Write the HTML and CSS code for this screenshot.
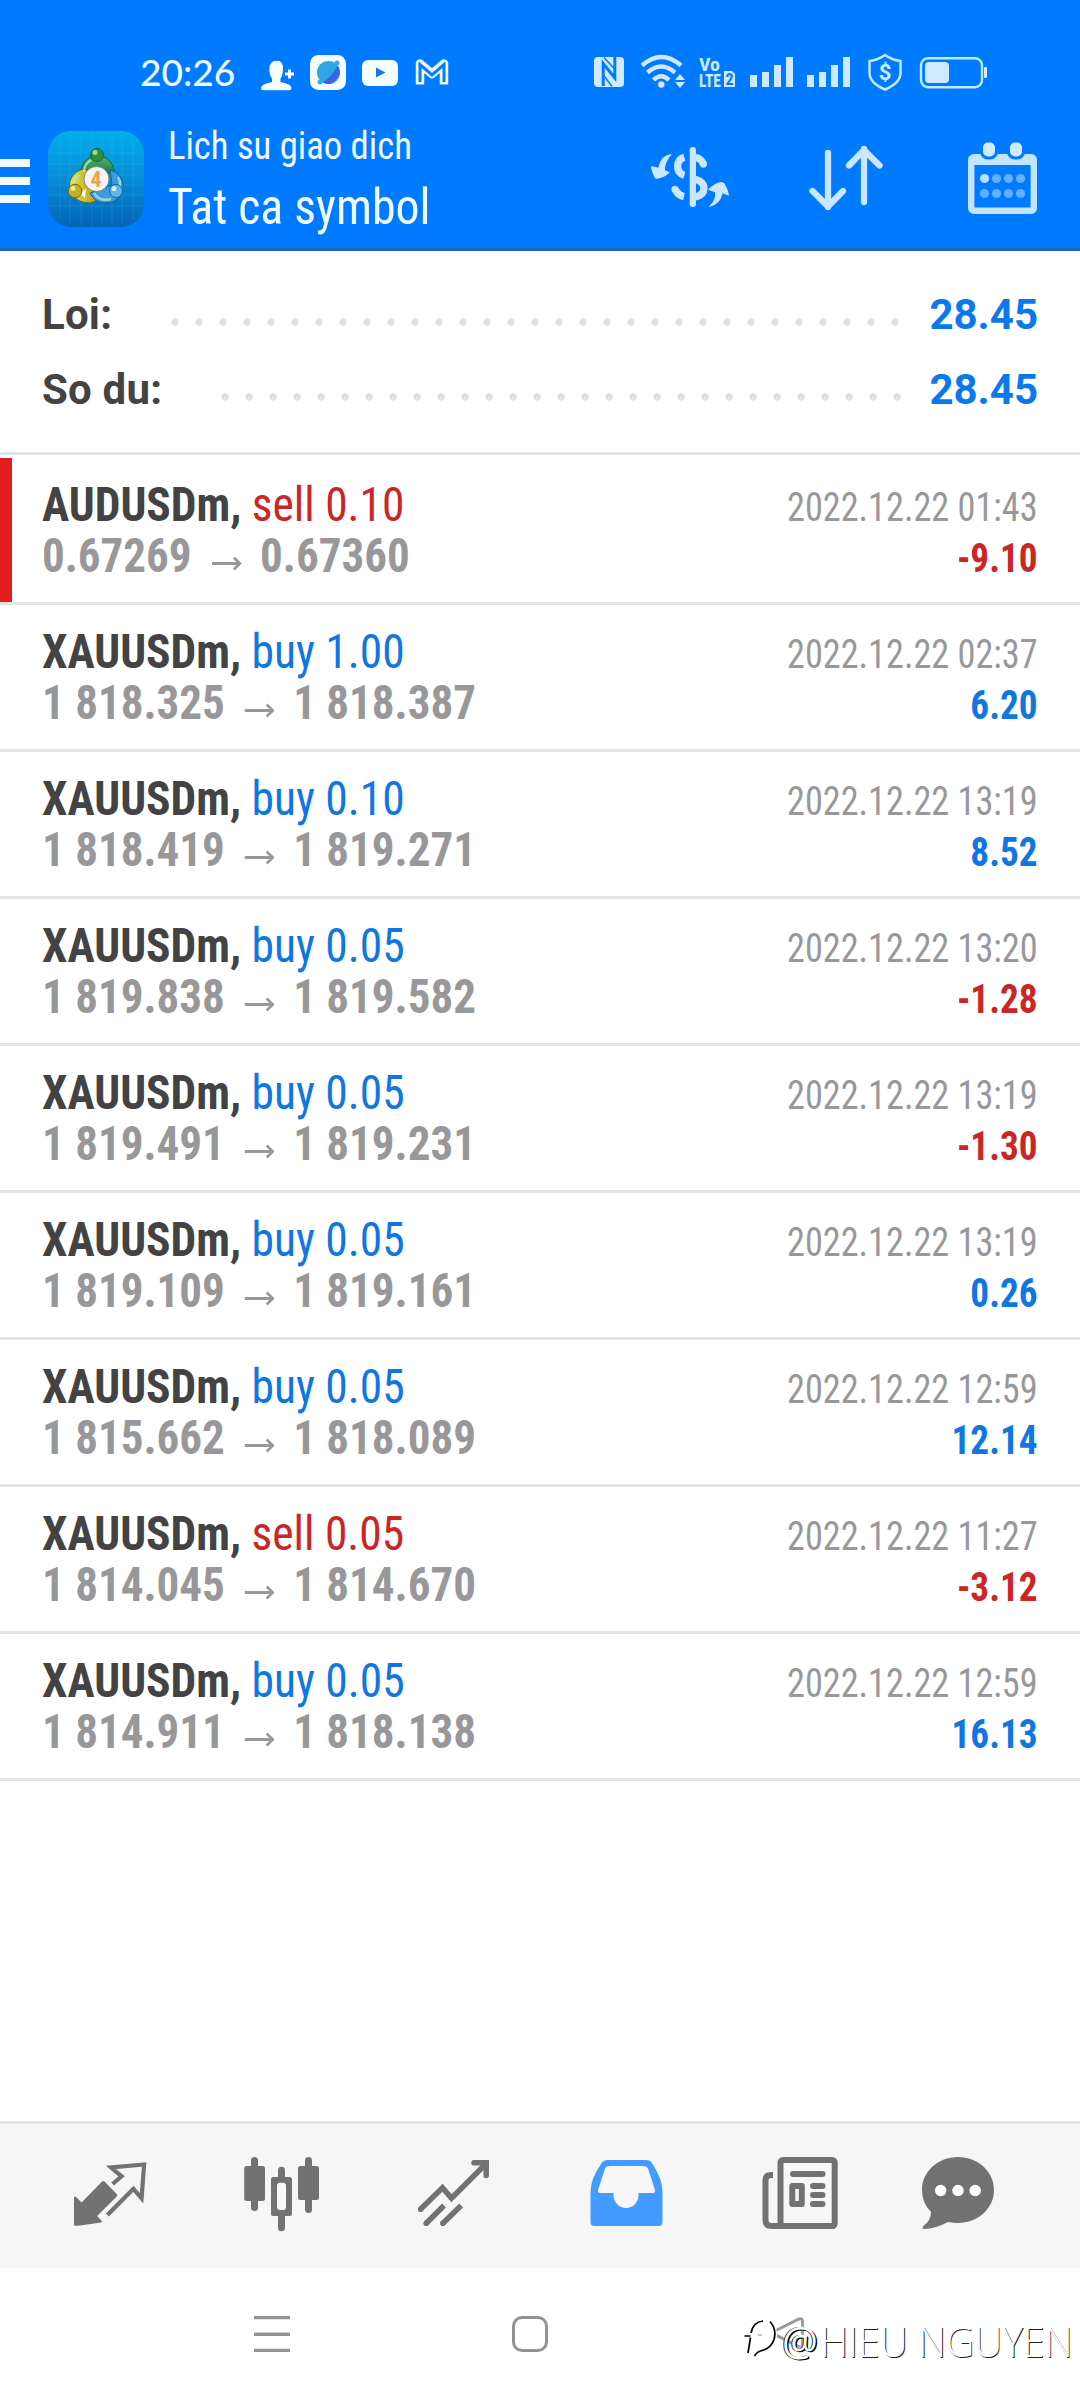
FILE: index.html
```html
<!DOCTYPE html>
<html lang="vi">
<head>
<meta charset="utf-8">
<title>Lich su giao dich</title>
<link rel="stylesheet" href="styles.css">
</head>
<body>
<header class="header">
  <div class="status">
    <span class="clock">20:26</span>
    <svg class="status-left" width="210" height="108" viewBox="250 0 210 108" fill="#f4fdff">
      <path d="M276.500 60.500q7 0 6.500 9q-.5 7-2.500 9v3.500q11 2 11 6q0 2.200-2.500 2.200h-25.500q-2.500 0-2.500-2.200q0-4 11-6v-3.500q-2.500-3-2.700-9q0-9 8.200-9z"/>
      <path d="M289.500 69.500v9M285 74h9" stroke="#f4fdff" stroke-width="3"/>
      <rect x="310" y="55" width="36" height="35" rx="8.500"/>
      <circle cx="328.500" cy="72.500" r="11.500" fill="#2fa6e4"/>
      <path d="M337.500 65.500q5 7-1 14t-14 3q9-5 15-17z" fill="#3b62e8"/>
      <circle cx="337" cy="63" r="2.500" fill="#3fa8dc"/><circle cx="320" cy="82" r="2.500" fill="#3fa8dc"/>
      <rect x="362" y="60" width="36" height="26" rx="6"/>
      <path d="M376 67.500l9.500 5-9.500 5z" fill="#1878e6"/>
      <path d="M420 84.500V63.500l12 10.500 12-10.500v21" fill="none" stroke="#eafcff" stroke-width="8.500" stroke-linejoin="round"/>
      <path d="M420 82V64.500l12 10.500 12-10.500V82" fill="none" stroke="#0a7cfb" stroke-width="3"/>
    </svg>
    <svg class="status-right" width="415" height="108" viewBox="585 0 415 108" fill="#cfeaff">
      <rect x="594" y="57" width="30" height="30" rx="4"/>
      <path d="M603.200 86V63.500l11.600 14.500V57" fill="none" stroke="#007aff" stroke-width="3"/>
      <path d="M604 57.500l11 12M603 74.500l9 12" stroke="#007aff" stroke-width="1.500"/>
      <g fill="none" stroke="#cfeaff" stroke-width="4.500">
        <path d="M642 65.500q19.500-17 39 0"/><path d="M647.500 72.500q13.500-12 27.500 0"/><path d="M653.500 80q7.500-7.500 15.500 0"/>
      </g>
      <circle cx="661.300" cy="84.500" r="3.200"/>
      <path d="M680 74l5 6h-10zM680 88l5-6h-10z"/>
      <text class="volte" x="699" y="71" textLength="21" lengthAdjust="spacingAndGlyphs">Vo</text>
      <text class="volte" x="699" y="86.500" textLength="22" lengthAdjust="spacingAndGlyphs">LTE</text>
      <path d="M724 71h8l3 3v13h-11z"/>
      <text class="sim" x="725.500" y="85">2</text>
      <path d="M750 75h7v12h-7zM762 72h7v15h-7zM774 65h7v22h-7zM786 57h7v30h-7z"/>
      <path d="M807 75h7v12h-7zM819 72h7v15h-7zM831 65h7v22h-7zM843 57h7v30h-7z"/>
      <path d="M885 55q7 5 15.500 6v12q0 10-15.500 16.500Q869.500 83 869.500 73V61q8.500-1 15.500-6z" fill="none" stroke="#bfeaff" stroke-width="2.500"/>
      <text class="shield" x="885" y="80" text-anchor="middle">$</text>
      <rect x="921" y="58.200" width="61" height="29" rx="7" fill="none" stroke="#bfeaff" stroke-width="2.400"/>
      <rect x="925" y="62" width="24" height="21" rx="4"/>
      <rect x="984" y="67" width="3" height="11" rx="1"/>
    </svg>
  </div>
  <div class="appbar">
    <svg class="menu" width="30" height="44" fill="#f0fbff"><path d="M0 0h30v8H0zM0 18h30v8H0zM0 36h30v8H0z"/></svg>
    <svg class="logo" width="96" height="96" viewBox="0 0 96 96">
      <defs>
        <linearGradient id="sky" x2="0" y2="1"><stop offset="0" stop-color="#04aeea"/><stop offset=".45" stop-color="#0790d8"/><stop offset="1" stop-color="#0464b6"/></linearGradient>
        <linearGradient id="green" x2="0" y2="1"><stop offset="0" stop-color="#5db46c"/><stop offset="1" stop-color="#1b7d45"/></linearGradient>
        <linearGradient id="gold" x2="1"><stop offset="0" stop-color="#e8e04a"/><stop offset="1" stop-color="#b39a12"/></linearGradient>
      </defs>
      <rect width="96" height="96" rx="23" fill="url(#sky)"/>
      <path d="M12 8v80M22 3v90M33 1v94M44 1v94M54 1v94M64 1v94M74 3v90M85 8v80M2 22h92M1 33h94M1 44h94M1 54h94M1 64h94M2 75h92" stroke="#58ccff" stroke-opacity=".16" fill="none"/>
      <path d="M49 25a16 16 0 0 0-16 17h33a16 16 0 0 0-17-17z" fill="url(#green)" stroke="#1b5c3a"/>
      <path d="M36 38A17 17 0 0 0 23 62q6 10 19 10l6-2-4-14 8-12z" fill="url(#gold)" stroke="#5c6a1e"/>
      <path d="M62 39a17 17 0 0 1 12 23q-5 10-17 10-10 0-15-10l22-8z" fill="#3b9be0" stroke="#0d5fa6"/>
      <path d="M36 41a14 14 0 0 1 7-12M26 60a13 13 0 0 1 5-16M46 62q5 9 17 6M70 46q4 8 0 12" stroke="#b9ecca" stroke-width="2.500" stroke-opacity=".75" fill="none"/>
      <path d="M31 62l7-4-1 9zM63 57l8 6-5 3z" fill="#f3fbe8"/>
      <circle cx="49" cy="24" r="6.500" fill="#2e8f3e" stroke="#18633a"/><circle cx="47" cy="21.500" r="2.500" fill="#9ade93"/>
      <circle cx="27" cy="60" r="6.800" fill="#c6ae24" stroke="#6e6a1c"/><circle cx="25" cy="57.500" r="2.500" fill="#f2ea87"/>
      <circle cx="68" cy="60" r="6.500" fill="#5fb4ea" stroke="#1568ac"/><circle cx="66" cy="57.500" r="2.500" fill="#d3f0ff"/>
      <circle cx="48.500" cy="48" r="12.500" fill="#f5f3f4" stroke="#5b7c6c" stroke-width=".8"/>
      <text class="logo-digit" x="48" y="56" text-anchor="middle">4</text>
    </svg>
    <div class="titles">
      <div class="subtitle">Lich su giao dich</div>
      <div class="title">Tat ca symbol</div>
    </div>
    <svg class="act-cycle" width="110" height="90" viewBox="0 0 330 270" fill="#cce6ff">
      <rect x="149" y="36" width="19" height="180" rx="9"/>
      <g fill="none" stroke="#cce6ff" stroke-width="22">
        <path d="M133 67Q113 73 113 94T133 121"/>
        <path d="M166 67Q184 72 190 86"/>
        <path d="M166 133Q192 140 192 160T166 186"/>
        <path d="M106 164Q114 181 132 185"/>
      </g>
      <circle cx="190" cy="87" r="11"/><circle cx="105" cy="163" r="11"/>
      <path d="M96 57C70 60 60 75 55 98L33 93Q33 105 44 128Q50 134 58 130Q80 124 89 112L75 106C75 90 80 75 96 57z"/>
      <path d="M205 216C222 200 227 190 225 172L204 164Q225 143 243 141Q252 141 256 150Q266 168 267 182L247 175C245 195 230 212 205 216z"/>
    </svg>
    <svg class="act-sort" width="80" height="70" fill="none" stroke="#cce6ff" stroke-width="6.300" stroke-linecap="round" stroke-linejoin="round">
      <path d="M22 9v54M6.500 47L22 62.500 37 47M58 58V5M43 21.500L58 6l15.500 15.500"/>
    </svg>
    <svg class="act-cal" width="70" height="72">
      <rect x="3.200" y="15.200" width="62.600" height="53.600" rx="2.500" fill="none" stroke="#c2e4ff" stroke-width="6.400"/>
      <path d="M3 13h63v10H3z" fill="#c2e4ff"/>
      <g fill="#d2eaff" stroke="#007aff" stroke-width="3"><rect x="13.500" y="-1" width="15" height="17" rx="6.500"/><rect x="40.500" y="-1" width="15" height="17" rx="6.500"/></g>
      <g fill="#62b0ff"><circle cx="16.500" cy="36.500" r="4.600" fill="#b2e2ff"/><circle cx="28.500" cy="36.500" r="4.600"/><circle cx="40.500" cy="36.500" r="4.600"/><circle cx="52.500" cy="36.500" r="4.600"/><circle cx="16.500" cy="51.500" r="4.600"/><circle cx="28.500" cy="51.500" r="4.600"/><circle cx="40.500" cy="51.500" r="4.600"/><circle cx="52.500" cy="51.500" r="4.600"/></g>
    </svg>
  </div>
</header>

<section class="summary">
  <div class="sum-row"><span class="sum-label">Loi:</span><span class="dots"></span><span class="sum-value">28.45</span></div>
  <div class="sum-row"><span class="sum-label">So du:</span><span class="dots"></span><span class="sum-value">28.45</span></div>
</section>

<main class="deals" id="deals"></main>

<nav class="tabs">
  <svg width="172" height="144" viewBox="24 2124 172 144" fill="#727272">
    <path d="M74 2197q1-1 2 0l5.600 5.500 20.500-21q1.200-1 2.400 0l12.200 12.500q1 1.200 0 2.400L97.200 2216l4.600 5q.5 1-.8 1.400l-22.500 3.300h-3q-1.500 0-1.500-1.500z"/>
    <path d="M112.600 2184l9-7.700-10.500-8.800 33-3-2.500 33.800-8.200-9.500-26 26.200" fill="none" stroke="#727272" stroke-width="4.200"/>
  </svg>
  <svg width="172" height="144" viewBox="196 2124 172 144" fill="#727272">
    <rect x="251" y="2157" width="7" height="54" rx="3.500"/><rect x="244.200" y="2166" width="20.800" height="35" rx="2.500"/>
    <rect x="305" y="2157" width="7" height="56" rx="3.500"/><rect x="298" y="2166" width="21" height="34" rx="2.500"/>
    <rect x="278" y="2166.700" width="7" height="64.500" rx="3.500"/><rect x="271" y="2177" width="21" height="39" rx="2.500"/>
    <rect x="277" y="2182.700" width="9" height="27.300" rx="3" fill="#f9f9f9"/>
  </svg>
  <svg width="172" height="144" viewBox="368 2124 172 144" fill="none" stroke="#727272" stroke-width="5.500">
    <path d="M420.500 2209.300l22-21.500 9 10.500 34-34" stroke-linejoin="miter"/>
    <path d="M474 2162.700h12.200v12.800" stroke-linecap="round"/><path d="M478 2160l11 0v11z" fill="#727272" stroke="none"/>
    <path d="M426 2223.500l18-18M442.700 2223.500l18.500-18"/>
    <g fill="#727272" stroke="none"><circle cx="420.700" cy="2209.200" r="2.800"/><circle cx="426.200" cy="2223.300" r="2.800"/><circle cx="442.900" cy="2223.300" r="2.800"/></g>
  </svg>
  <svg width="173" height="144" viewBox="540 2124 173 144">
    <path d="M608 2160h38q4.500 0 6.500 4 10 15 10 28v30q0 4-4 4h-64q-4 0-4-4v-30q0-13 10.500-28 2-4 7-4z" fill="#439bff"/>
    <path d="M610 2166h33q4 0 5 2.500l7 21.500q.5 3-2 3h-14.500v2a12.500 13 0 0 1-25 0v-2H600q-2.500 0-2-3l7-21.500q1-2.500 5-2.500z" fill="#f6f6f6"/>
  </svg>
  <svg width="167" height="144" viewBox="713 2124 167 144">
    <path d="M773 2175h-2q-5.500 0-5.500 5v40q0 6 6 6h63" fill="none" stroke="#727272" stroke-width="6"/>
    <rect x="780.500" y="2160" width="54.200" height="66" rx="2.500" fill="#f7f7f7" stroke="#727272" stroke-width="6"/>
    <g fill="#727272"><rect x="790" y="2171" width="35.500" height="6" rx="3"/><rect x="810" y="2183" width="15.500" height="6" rx="3"/><rect x="810" y="2192" width="15.500" height="6" rx="3"/><rect x="810" y="2201" width="15.500" height="6" rx="3"/></g>
    <rect x="792.300" y="2186" width="9.500" height="18" fill="#f7f7f7" stroke="#727272" stroke-width="6" stroke-linejoin="round"/>
  </svg>
  <svg width="156" height="144" viewBox="880 2124 156 144">
    <path d="M958 2157c20 0 36 14.500 36 33s-16 33-36 33q-5 0-10-1-12 6.500-24 7-2.500-.5-1-2.500 8-6 8-14.500-9-9-9-22c0-18.500 16-33 36-33z" fill="#727272"/>
    <g fill="#fff"><circle cx="940.700" cy="2190.500" r="5.700"/><circle cx="958" cy="2190.500" r="5.700"/><circle cx="975.200" cy="2190.500" r="5.700"/></g>
  </svg>
</nav>

<footer class="sysnav">
  <svg width="36" height="36" fill="#939393"><path d="M0 0h36v3.200H0zM0 16.400h36v3.600H0zM0 32.800h36V36H0z"/></svg>
  <svg width="36" height="36" fill="none" stroke="#939393" stroke-width="3"><rect x="1.500" y="1.500" width="33" height="33" rx="8.500"/></svg>
  <svg width="38" height="36" fill="none" stroke="#999" stroke-width="3"><path d="M4 15.500L29 3q3.500-1 3.500 2.500v27L4 18z"/></svg>
  <div class="watermark">
    <svg width="42" height="48" viewBox="0 0 42 48" fill="none">
      <path d="M7 36l3-16M6 18h6Q14 7 22 5.500q12-1 12 12.500 0 12-11 14-5 1-7 5" stroke="#fff" stroke-width="6"/>
      <path d="M8 36l2.500-15.500M4.500 19h6M11 16Q13 5 23 4M30 4.500q7 8 4 18-3 9-12 11-5 1-7.500 5.500" stroke="#000" stroke-width="1.700"/>
      <path d="M18 18h4" stroke="#888"/>
    </svg>
    <span class="at">@</span><span class="name">HIEU NGUYEN</span>
  </div>
</footer>
<script src="deals.js"></script>
</body>
</html>
```
FILE: styles.css
```css
* { box-sizing: border-box; }
body {
  margin: 0;
  width: 1080px;
  height: 2400px;
  overflow: hidden;
  display: flex;
  flex-direction: column;
  background: #fff;
  color: #434343;
  font-family: Roboto, "Noto Sans", sans-serif;
}
svg { display: block; flex: none; }

.header { height: 251px; background: #007aff; border-bottom: 3px solid #1a69bd; color: #effbff; }
.status { display: flex; height: 108px; padding-left: 140px; }
.clock { width: 110px; font: 500 37px/144px Lato, sans-serif; }
.status-right { margin-left: 125px; }
.volte { font: bold 18px "Roboto Condensed", Roboto, sans-serif; }
.sim { font: bold 16px "Roboto Condensed", Roboto, sans-serif; fill: #007aff; }
.shield { font: bold 22px Roboto, sans-serif; }

.appbar { display: flex; height: 140px; align-items: flex-start; }
.menu { margin-top: 51px; }
.logo { margin: 23px 0 0 18px; }
.logo-digit { font: bold 22px "Roboto Condensed", Roboto, sans-serif; fill: #f3a04c; }
.titles { width: 472px; padding-top: 9px; margin-left: 24px; font-family: "Roboto Condensed", Roboto, sans-serif; font-weight: 450; white-space: nowrap; }
.subtitle { font-size: 39px; line-height: 58px; transform: scaleX(.94); transform-origin: left; }
.title { font-size: 50px; line-height: 65px; transform: scaleX(.956); transform-origin: left; }
.act-cycle { margin-top: 27px; }
.act-sort { margin: 36px 0 0 56px; }
.act-cal { margin: 34px 0 0 82px; }

.summary { height: 204px; padding: 26px 42px 0 42px; border-bottom: 3px solid #e3e3e3; font-size: 42px; font-weight: 700; line-height: 75px; }
.sum-row { display: flex; height: 75px; }
.sum-label { flex: none; letter-spacing: .2px; }
.sum-value { color: #0b78ee; }
.dots { flex: 1; margin: 0 19px 0 51px; background: radial-gradient(circle at 12px 45px, #e2e2e2 3.300px, transparent 4.200px) 0 0 / 24px 75px; }

.deals { flex: 1; padding-top: 3px; font-family: "Roboto Condensed", Roboto, sans-serif; white-space: nowrap; }
.deal { display: flex; justify-content: space-between; height: 147px; padding: 0 42px; border-bottom: 3px solid #e3e3e3; line-height: 51px; }
.deal.marked { box-shadow: inset 12px 0 #e11d1e; }
.info { padding-top: 21px; font-size: 48px; }
.symbol { font-weight: 700; }
.headline { transform: scaleX(.947); transform-origin: left; }
.prices { display: flex; color: #98989b; font-weight: 700; transform: scaleX(.938); transform-origin: left; }
.arrow { margin: 26px 20px 0 21px; }
.meta { padding-top: 24px; font-size: 40px; text-align: right; }
.date { color: #98989b; transform: scaleX(.906); transform-origin: right; }
.profit { font-weight: 700; transform: scaleX(.93); transform-origin: right; }
.blue { color: #0f76e2; }
.red { color: #ca2626; }

.tabs { display: flex; height: 147px; padding-left: 24px; border-top: 3px solid #e3e3e3; background: #f6f6f6; }

.sysnav { position: relative; display: flex; justify-content: space-between; height: 132px; padding: 48px 272px 0 254px; }
.watermark { position: absolute; left: 740px; top: 49px; display: flex; color: #fff; font-family: "Open Sans", sans-serif; line-height: 48px; white-space: nowrap; }
.at { width: 38px; font-size: 40px; text-shadow: 1.500px 1px 0 #000, -1px 0 0 #222, 0 0 3px #fff; }
.name { font-size: 42px; font-weight: 300; transform: scaleX(.93); transform-origin: left; text-shadow: 1px 1px 0 #222; }
```
FILE: deals.js
```js
const deals = [
  ['AUDUSDm', 'sell', '0.10', '0.67269', '0.67360', '2022.12.22 01:43', '-9.10'],
  ['XAUUSDm', 'buy', '1.00', '1 818.325', '1 818.387', '2022.12.22 02:37', '6.20'],
  ['XAUUSDm', 'buy', '0.10', '1 818.419', '1 819.271', '2022.12.22 13:19', '8.52'],
  ['XAUUSDm', 'buy', '0.05', '1 819.838', '1 819.582', '2022.12.22 13:20', '-1.28'],
  ['XAUUSDm', 'buy', '0.05', '1 819.491', '1 819.231', '2022.12.22 13:19', '-1.30'],
  ['XAUUSDm', 'buy', '0.05', '1 819.109', '1 819.161', '2022.12.22 13:19', '0.26'],
  ['XAUUSDm', 'buy', '0.05', '1 815.662', '1 818.089', '2022.12.22 12:59', '12.14'],
  ['XAUUSDm', 'sell', '0.05', '1 814.045', '1 814.670', '2022.12.22 11:27', '-3.12'],
  ['XAUUSDm', 'buy', '0.05', '1 814.911', '1 818.138', '2022.12.22 12:59', '16.13'],
];
const arrow = '<svg class="arrow" width="32" height="15" fill="none" stroke="#98989b"><path d="M0 7.500h29" stroke-width="3"/><path d="M23.500 1.500l6.500 6-6.500 6" stroke-width="2.800"/></svg>';
document.getElementById('deals').innerHTML = deals.map(([symbol, side, volume, open, close, date, profit], i) => `
  <article class="deal${i === 0 ? ' marked' : ''}">
    <div class="info">
      <div class="headline"><span class="symbol">${symbol},</span> <span class="${side === 'buy' ? 'blue' : 'red'}">${side} ${volume}</span></div>
      <div class="prices"><span>${open}</span>${arrow}<span>${close}</span></div>
    </div>
    <div class="meta">
      <div class="date">${date}</div>
      <div class="profit ${profit[0] === '-' ? 'red' : 'blue'}">${profit}</div>
    </div>
  </article>`).join('');
```
